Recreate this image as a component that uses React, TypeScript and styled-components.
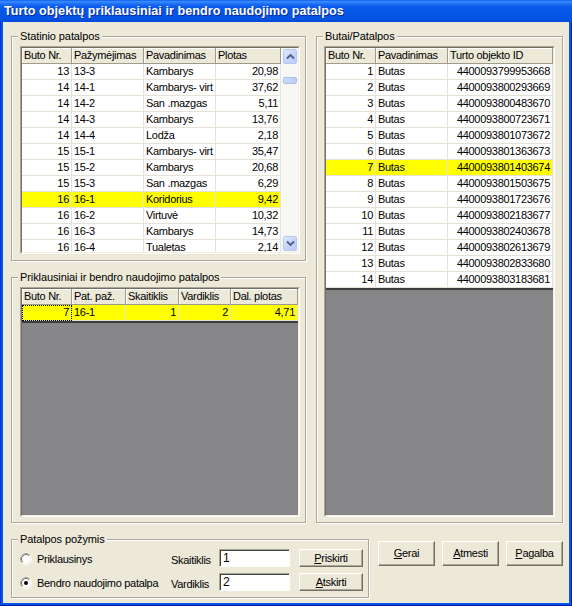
import React from 'react';
import styled, { createGlobalStyle } from 'styled-components';

const GlobalStyle = createGlobalStyle`
  html, body { margin: 0; padding: 0; background: #ECE9D8; }
  body {
    width: 572px; height: 606px; overflow: hidden;
    font-family: "Liberation Sans", Arial, sans-serif;
    font-size: 11px; color: #000;
  }
  * { box-sizing: border-box; }
`;

const Window = styled.div`
  width: 572px;
  height: 606px;
  display: flex;
  flex-direction: column;
  background: #0655E6;
  box-shadow: inset 1px 0 0 #0831D9, inset -1px 0 0 #001EA0, inset 0 -1px 0 #001EA0;
`;

const TitleBar = styled.div`
  height: 22px;
  flex: none;
  display: flex;
  align-items: center;
  padding-left: 4px;
  background: linear-gradient(180deg, #0A5EF2 0%, #3D8EFD 8%, #2273F6 16%, #0B5CEC 30%, #0556E6 55%, #0553E3 85%, #0348D8 100%);
  color: #fff;
  font-weight: bold;
  font-size: 12.6px;
  letter-spacing: 0.05px;
  text-shadow: 1px 1px 0 #0A2A9C;
  white-space: nowrap;
  overflow: hidden;
`;

const Client = styled.div`
  flex: 1;
  margin: 0 3px 3px;
  background: #ECE9D8;
  display: flex;
  flex-direction: column;
  gap: 16px;
  padding: 14px 6px 5px 8px;
`;

const Upper = styled.div`
  display: flex;
  gap: 10px;
  height: 487px;
`;

const Column = styled.div<{ $w: number }>`
  width: ${p => p.$w}px;
  display: flex;
  flex-direction: column;
  gap: 16px;
`;

const GroupBox = styled.div<{ $h: number; $pl: number; $pr: number; $pt: number; $pb: number; $w?: number }>`
  position: relative;
  width: ${p => (p.$w ? `${p.$w}px` : 'auto')};
  height: ${p => p.$h}px;
  border: 1px solid #ACA899;
  box-shadow: inset 1px 1px 0 #fff, 1px 1px 0 #fff;
  padding: ${p => `${p.$pt}px ${p.$pr}px ${p.$pb}px ${p.$pl}px`};
  display: flex;
  flex-direction: column;
`;

const Caption = styled.span`
  position: absolute;
  top: -7px;
  left: 6px;
  padding: 0 2px;
  line-height: 13px;
  background: #ECE9D8;
  letter-spacing: -0.1px;
`;

const GridFrame = styled.div<{ $w: number; $h: number }>`
  width: ${p => p.$w}px;
  height: ${p => p.$h}px;
  border: 1px solid;
  border-color: #ACA899 #FFFFFF #FFFFFF #ACA899;
  flex: none;
`;

const GridInner = styled.div`
  width: 100%;
  height: 100%;
  border: 1px solid;
  border-color: #716F64 #F1EFE2 #F1EFE2 #716F64;
  display: flex;
  overflow: hidden;
  background: #868587;
`;

const GridTable = styled.div`
  flex: 1;
  min-width: 0;
  display: flex;
  flex-direction: column;
  overflow: hidden;
`;

const Row = styled.div<{ $cols: string; $sel?: boolean }>`
  display: grid;
  grid-template-columns: ${p => p.$cols};
  height: 16px;
  flex: none;
  background: ${p => (p.$sel ? '#FFFF00' : '#FFFFFF')};
`;

const HeadRow = styled(Row)`
  background: #ECE9D8;
`;

const HeadCell = styled.div`
  height: 16px;
  line-height: 15px;
  padding-left: 2px;
  border-right: 1px solid #9D9B8C;
  border-bottom: 1px solid #9D9B8C;
  box-shadow: inset 1px 1px 0 #fff;
  white-space: nowrap;
  overflow: hidden;
  letter-spacing: -0.3px;
`;

const Cell = styled.div<{ $align?: 'left' | 'right'; $focus?: boolean }>`
  height: 16px;
  line-height: 15px;
  padding: 0 2px;
  text-align: ${p => p.$align || 'left'};
  border-right: 1px solid #E4E2D6;
  border-bottom: 1px solid #E4E2D6;
  white-space: nowrap;
  overflow: hidden;
  letter-spacing: -0.3px;
  outline: ${p => (p.$focus ? '1px dotted #000' : 'none')};
  outline-offset: -1px;
`;

const Filler = styled.div`
  flex: 1;
  border-top: 2px solid #3C3C3C;
  background: #868587;
`;

const ScrollBar = styled.div`
  width: 17px;
  flex: none;
  display: flex;
  flex-direction: column;
  background: #F7F7F3;
  border-left: 1px solid #FAFAF7;
`;

const ScrollBtn = styled.div`
  width: 16px;
  height: 17px;
  flex: none;
  padding: 1px;
  display: flex;
`;

const ScrollFace = styled.div`
  flex: 1;
  border: 1px solid #B5C7F2;
  border-radius: 2px;
  background: linear-gradient(135deg, #E2EAFE 0%, #C6D5FB 50%, #B8CAF5 100%);
  display: flex;
  align-items: center;
  justify-content: center;
`;

const Track = styled.div`
  flex: 1;
  display: flex;
  flex-direction: column;
  padding: 0 1px;
`;

const Thumb = styled.div`
  margin-top: 12px;
  height: 7px;
  border: 1px solid #A9BCEB;
  border-radius: 2px;
  background: linear-gradient(90deg, #CCDAFC, #BCCDF7);
`;

const BottomRow = styled.div`
  display: flex;
  gap: 9px;
  align-items: flex-start;
`;

const OptionsGrid = styled.div`
  display: grid;
  grid-template-columns: 151px 48px 71px 64px;
  column-gap: 0;
  grid-template-rows: 18px 18px;
  row-gap: 6px;
  align-items: center;
`;

const RadioLabel = styled.label`
  display: flex;
  align-items: center;
  gap: 5px;
  white-space: nowrap;
  letter-spacing: -0.3px;
  padding-top: 1px;
`;

const FieldLabel = styled.span`
  letter-spacing: -0.3px;
  padding-top: 3px;
`;

const Input = styled.div`
  width: 71px;
  height: 18px;
  background: #fff;
  border: 1px solid;
  border-color: #ACA899 #fff #fff #ACA899;
  box-shadow: inset 1px 1px 0 #404040;
  padding: 2px 0 0 3px;
  line-height: 13px;
  font-size: 12px;
`;

const Button = styled.div<{ $w: number; $h: number; $ml?: number }>`
  width: ${p => p.$w}px;
  height: ${p => p.$h}px;
  margin-left: ${p => p.$ml || 0}px;
  background: #ECE9D8;
  border: 1px solid;
  border-color: #FFFFFF #716F64 #716F64 #FFFFFF;
  box-shadow: inset -1px -1px 0 #ACA899;
  display: flex;
  align-items: center;
  justify-content: center;
  letter-spacing: -0.3px;
  white-space: nowrap;
  padding-bottom: 1px;
`;

const Buttons = styled.div`
  display: flex;
  gap: 7px;
  margin-top: 2px;
`;

const U = styled.span`
  text-decoration: underline;
`;

const Chevron = ({ up }: { up: boolean }) => (
  <svg width="9" height="7" viewBox="0 0 9 7">
    <polyline
      points={up ? '1,5.5 4.5,2 8,5.5' : '1,1.5 4.5,5 8,1.5'}
      fill="none"
      stroke="#4D6185"
      strokeWidth="1.8"
    />
  </svg>
);

const Radio = ({ checked }: { checked: boolean }) => (
  <svg width="12" height="12" viewBox="0 0 12 12">
    <circle cx="6" cy="6" r="5" fill="#fff" />
    <path d="M2.11 9.89 A5.5 5.5 0 0 1 9.89 2.11" fill="none" stroke="#ACA899" />
    <path d="M9.89 2.11 A5.5 5.5 0 0 1 2.11 9.89" fill="none" stroke="#FFFFFF" />
    <path d="M2.82 9.18 A4.5 4.5 0 0 1 9.18 2.82" fill="none" stroke="#716F64" />
    <path d="M9.18 2.82 A4.5 4.5 0 0 1 2.82 9.18" fill="none" stroke="#F1EFE2" />
    {checked && <circle cx="6" cy="6" r="2" fill="#000" />}
  </svg>
);

type Align = 'left' | 'right';

const leftCols = '50px 72px 72px 1fr';
const leftHead = ['Buto Nr.', 'Pažymėjimas', 'Pavadinimas', 'Plotas'];
const leftAlign: Align[] = ['right', 'left', 'left', 'right'];
const leftRows: string[][] = [
  ['13', '13-3', 'Kambarys', '20,98'],
  ['14', '14-1', 'Kambarys- virt', '37,62'],
  ['14', '14-2', 'San .mazgas', '5,11'],
  ['14', '14-3', 'Kambarys', '13,76'],
  ['14', '14-4', 'Lodža', '2,18'],
  ['15', '15-1', 'Kambarys- virt', '35,47'],
  ['15', '15-2', 'Kambarys', '20,68'],
  ['15', '15-3', 'San .mazgas', '6,29'],
  ['16', '16-1', 'Koridorius', '9,42'],
  ['16', '16-2', 'Virtuvė', '10,32'],
  ['16', '16-3', 'Kambarys', '14,73'],
  ['16', '16-4', 'Tualetas', '2,14'],
];

const rightCols = '50px 72px 1fr';
const rightHead = ['Buto Nr.', 'Pavadinimas', 'Turto objekto ID'];
const rightAlign: Align[] = ['right', 'left', 'right'];
const ids = [
  '4400093799953668', '4400093800293669', '4400093800483670', '4400093800723671',
  '4400093801073672', '4400093801363673', '4400093801403674', '4400093801503675',
  '4400093801723676', '4400093802183677', '4400093802403678', '4400093802613679',
  '4400093802833680', '4400093803183681',
];
const rightRows = ids.map((id, i) => [String(i + 1), 'Butas', id]);

const botCols = '50px 54px 53px 52px 1fr';
const botHead = ['Buto Nr.', 'Pat. paž.', 'Skaitiklis', 'Vardiklis', 'Dal. plotas'];
const botAlign: Align[] = ['right', 'left', 'right', 'right', 'right'];
const botRows = [['7', '16-1', '1', '2', '4,71']];

interface GridProps {
  w: number;
  h: number;
  cols: string;
  head: string[];
  align: Align[];
  rows: string[][];
  sel: number;
  filler?: boolean;
  scroll?: boolean;
  focusFirst?: boolean;
}

const DataGrid = ({ w, h, cols, head, align, rows, sel, filler, scroll, focusFirst }: GridProps) => (
  <GridFrame $w={w} $h={h}>
    <GridInner>
      <GridTable>
        <HeadRow $cols={cols}>
          {head.map(t => (
            <HeadCell key={t}>{t}</HeadCell>
          ))}
        </HeadRow>
        {rows.map((r, i) => (
          <Row key={i} $cols={cols} $sel={i === sel}>
            {r.map((c, j) => (
              <Cell key={j} $align={align[j]} $focus={focusFirst && i === 0 && j === 0}>
                {c}
              </Cell>
            ))}
          </Row>
        ))}
        {filler && <Filler />}
      </GridTable>
      {scroll && (
        <ScrollBar>
          <ScrollBtn>
            <ScrollFace>
              <Chevron up />
            </ScrollFace>
          </ScrollBtn>
          <Track>
            <Thumb />
          </Track>
          <ScrollBtn>
            <ScrollFace>
              <Chevron up={false} />
            </ScrollFace>
          </ScrollBtn>
        </ScrollBar>
      )}
    </GridInner>
  </GridFrame>
);

export default function App() {
  return (
    <>
      <GlobalStyle />
      <Window>
        <TitleBar>Turto objektų priklausiniai ir bendro naudojimo patalpos</TitleBar>
        <Client>
          <Upper>
            <Column $w={295}>
              <GroupBox $h={225} $pl={8} $pr={5} $pt={9} $pb={6}>
                <Caption>Statinio patalpos</Caption>
                <DataGrid
                  w={280}
                  h={208}
                  cols={leftCols}
                  head={leftHead}
                  align={leftAlign}
                  rows={leftRows}
                  sel={8}
                  scroll
                />
              </GroupBox>
              <GroupBox $h={246} $pl={8} $pr={5} $pt={9} $pb={5}>
                <Caption>Priklausiniai ir bendro naudojimo patalpos</Caption>
                <DataGrid
                  w={280}
                  h={230}
                  cols={botCols}
                  head={botHead}
                  align={botAlign}
                  rows={botRows}
                  sel={0}
                  filler
                  focusFirst
                />
              </GroupBox>
            </Column>
            <Column $w={247}>
              <GroupBox $h={487} $pl={7} $pr={7} $pt={9} $pb={5}>
                <Caption>Butai/Patalpos</Caption>
                <DataGrid
                  w={231}
                  h={471}
                  cols={rightCols}
                  head={rightHead}
                  align={rightAlign}
                  rows={rightRows}
                  sel={6}
                  filler
                />
              </GroupBox>
            </Column>
          </Upper>
          <BottomRow>
            <GroupBox $w={359} $h={59} $pl={8} $pr={6} $pt={9} $pb={6}>
              <Caption>Patalpos požymis</Caption>
              <OptionsGrid>
                <RadioLabel>
                  <Radio checked={false} />
                  Priklausinys
                </RadioLabel>
                <FieldLabel>Skaitiklis</FieldLabel>
                <Input>1</Input>
                <Button $w={64} $h={18} $ml={9}>
                  <span>
                    <U>P</U>riskirti
                  </span>
                </Button>
                <RadioLabel>
                  <Radio checked />
                  Bendro naudojimo patalpa
                </RadioLabel>
                <FieldLabel>Vardiklis</FieldLabel>
                <Input>2</Input>
                <Button $w={64} $h={18} $ml={9}>
                  <span>
                    <U>A</U>tskirti
                  </span>
                </Button>
              </OptionsGrid>
            </GroupBox>
            <Buttons>
              <Button $w={57} $h={25}>
                <span>
                  <U>G</U>erai
                </span>
              </Button>
              <Button $w={57} $h={25}>
                <span>
                  <U>A</U>tmesti
                </span>
              </Button>
              <Button $w={57} $h={25}>
                <span>
                  <U>P</U>agalba
                </span>
              </Button>
            </Buttons>
          </BottomRow>
        </Client>
      </Window>
    </>
  );
}
